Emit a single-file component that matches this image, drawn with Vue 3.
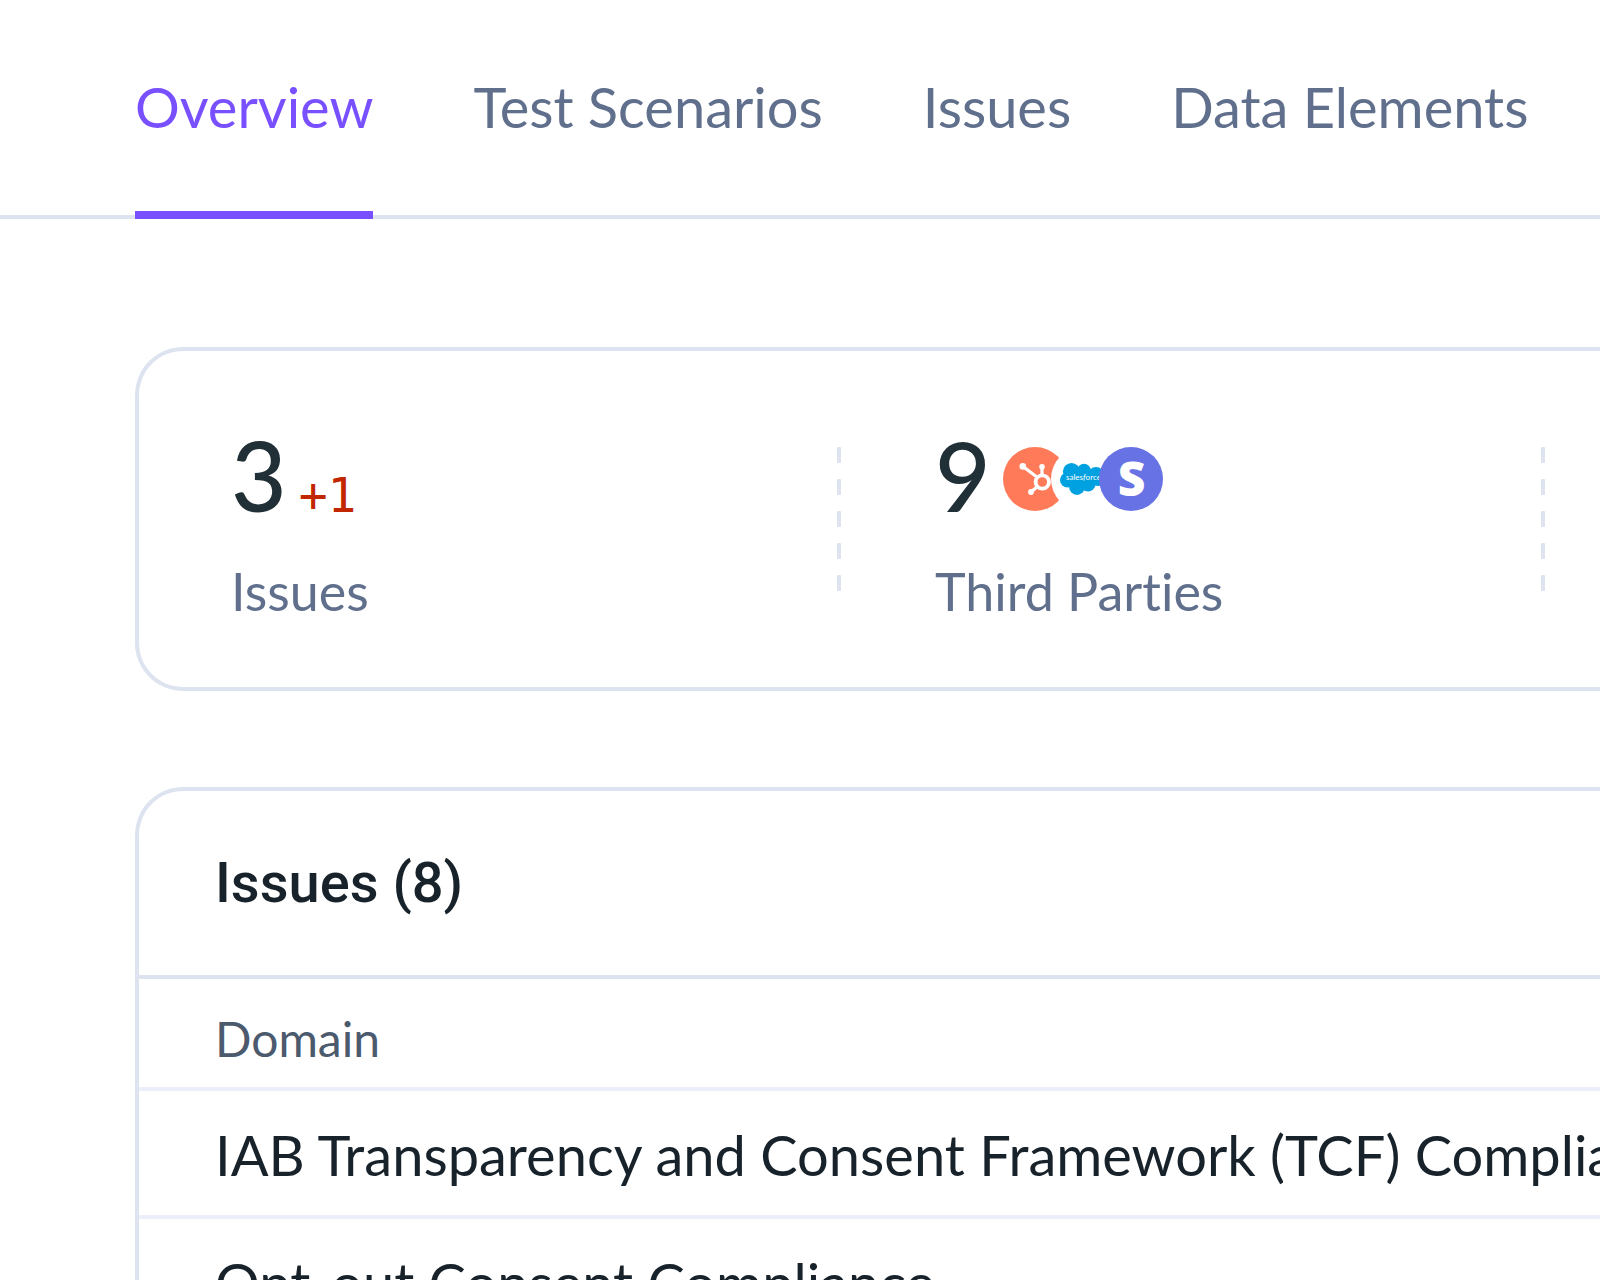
<template>
  <div class="page">
    <nav class="tabs">
      <a
        v-for="tab in tabs"
        :key="tab"
        href="#"
        class="tab"
        :class="{ active: activeTab === tab }"
        @click.prevent="activeTab = tab"
      >{{ tab }}</a>
    </nav>

    <main class="content">
      <!-- Summary -->
      <section class="card stats">
        <div v-for="stat in stats" :key="stat.label" class="stat">
          <div class="stat-body">
            <div class="stat-value">
              <span class="number">{{ stat.value }}</span>
              <span v-if="stat.delta" class="delta">{{ stat.delta }}</span>
              <div v-if="stat.logos" class="logos">
                <svg class="logo" viewBox="0 0 64 64" role="img" aria-label="HubSpot">
                  <circle cx="32" cy="32" r="32" fill="#ff7a59" />
                  <g stroke="#fff" stroke-width="3.2" fill="none">
                    <path d="M20 19.5L34.5 30.5M39 20V28M34.5 39.5L28 45" />
                    <circle cx="39.3" cy="35" r="6.7" stroke-width="3.8" />
                  </g>
                  <g fill="#fff">
                    <circle cx="19.8" cy="19.4" r="3.3" />
                    <circle cx="39" cy="19.8" r="2.8" />
                    <circle cx="28" cy="45" r="2.9" />
                  </g>
                </svg>
                <svg class="logo" viewBox="0 0 64 64" role="img" aria-label="Salesforce">
                  <circle cx="32" cy="32" r="32" fill="#fff" />
                  <g fill="#00a1e0">
                    <circle cx="20.5" cy="24.5" r="8.6" />
                    <circle cx="33" cy="23.5" r="6.8" />
                    <circle cx="45" cy="28" r="8" />
                    <circle cx="16.5" cy="33" r="7.5" />
                    <circle cx="26" cy="40" r="7.9" />
                    <circle cx="37" cy="37" r="7.5" />
                    <circle cx="47" cy="31" r="8" />
                    <path d="M17 24h28v14H17z" />
                  </g>
                  <text x="15" y="33" class="salesforce-text">sales<tspan font-style="italic">f</tspan>orce</text>
                </svg>
                <svg class="logo" viewBox="0 0 64 64" role="img" aria-label="Stripe">
                  <circle cx="32" cy="32" r="32" fill="#6772e5" />
                  <text x="32.5" y="49" text-anchor="middle" class="stripe-text">S</text>
                </svg>
              </div>
            </div>
            <div class="stat-label">{{ stat.label }}</div>
          </div>
          <div class="divider">
            <span v-for="n in 5" :key="n"></span>
          </div>
        </div>
      </section>

      <!-- Issues -->
      <section class="card">
        <h2 class="card-title">Issues (8)</h2>
        <table class="issues">
          <thead>
            <tr>
              <th>Domain</th>
            </tr>
          </thead>
          <tbody>
            <tr v-for="issue in issues" :key="issue">
              <td>{{ issue }}</td>
            </tr>
          </tbody>
        </table>
      </section>
    </main>
  </div>
</template>

<script setup>
import { ref } from 'vue';

const tabs = ['Overview', 'Test Scenarios', 'Issues', 'Data Elements'];
const activeTab = ref('Overview');

const stats = [
  { label: 'Issues', value: 3, delta: '+1' },
  { label: 'Third Parties', value: 9, logos: true }
];

const issues = [
  'IAB Transparency and Consent Framework (TCF) Compliance',
  'Opt-out Consent Compliance'
];
</script>

<style>
body {
  margin: 0;
  background: #fff;
}
</style>

<style scoped>
.page {
  height: 100vh;
  overflow: hidden;
  font-family: Lato, Roboto, sans-serif;
  font-size: 56px;
  font-variant-ligatures: none;
  line-height: 64px;
  color: #18222a;
}

/* Tabs */
.tabs {
  display: flex;
  gap: 100px;
  padding-left: 135px;
  box-shadow: inset 0 -4px #dde4f0;
}

.tab {
  flex-shrink: 0;
  padding: 75px 0 72px;
  border-bottom: 8px solid transparent;
  color: #5f6f8c;
  text-decoration: none;
  white-space: nowrap;
}

.tab.active {
  color: #7950ff;
  border-bottom-color: #7950ff;
}

/* Cards */
.content {
  display: flex;
  flex-direction: column;
  gap: 96px;
  padding: 128px 0 0 135px;
}

.card {
  border: 4px solid #dde4f0;
  border-right: 0;
  border-radius: 48px 0 0 48px;
}

.stats {
  display: flex;
  padding-left: 92px;
}

.stat {
  display: flex;
  flex: 0 0 704px;
  box-sizing: border-box;
  justify-content: space-between;
  align-items: center;
  padding-right: 94px;
}

.stat-body {
  padding: 76px 0 64px;
}

.stat-value {
  display: flex;
  align-items: baseline;
  gap: 12px;
  height: 104px;
  margin-bottom: 28px;
}

.number {
  font-size: 96px;
  line-height: 96px;
  font-weight: 500;
  color: #212f37;
}

.delta {
  font-family: "DejaVu Sans Mono", monospace;
  font-size: 48px;
  color: #c22600;
}

.logos {
  display: flex;
  align-self: center;
}

.logo {
  width: 64px;
  height: 64px;
}

.logo + .logo {
  margin-left: -16px;
}

.salesforce-text {
  font-size: 8px;
  fill: #fff;
}

.stripe-text {
  font-family: "Open Sans", sans-serif;
  font-size: 48px;
  font-weight: 800;
  fill: #fff;
}

.stat-label {
  font-size: 52px;
  color: #5f6f8c;
}

.divider {
  display: flex;
  flex-direction: column;
  gap: 16px;
}

.divider span {
  width: 4px;
  height: 16px;
  border-radius: 1px;
  background: #dde4f0;
}

/* Issues table */
.card-title {
  margin: 0;
  padding: 60px 76px;
  border-bottom: 4px solid #dde4f0;
  font-family: Roboto, sans-serif;
  font-size: 56px;
  font-weight: 500;
}

.issues {
  width: 100%;
  border-collapse: separate;
  border-spacing: 0;
}

.issues th,
.issues td {
  padding: 32px 0 28px 76px;
  border-bottom: 4px solid #eceffa;
  font-weight: 400;
  text-align: left;
  white-space: nowrap;
}

.issues th {
  padding: 28px 0 16px 76px;
  font-size: 48px;
  color: #4c5a6e;
}
</style>
